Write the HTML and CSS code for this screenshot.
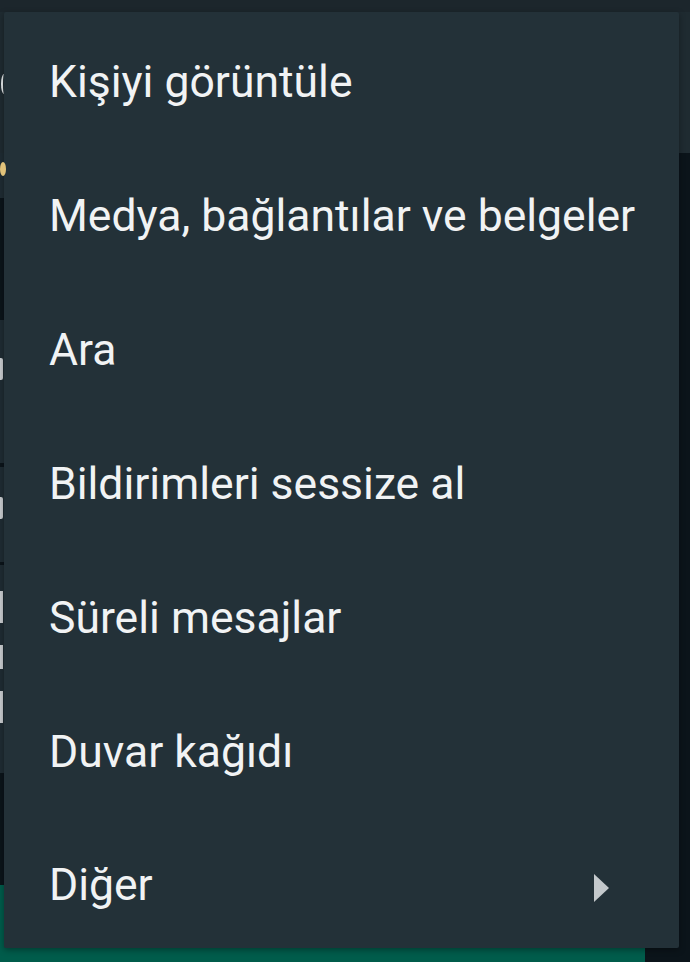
FILE: index.html
```html
<!DOCTYPE html>
<html lang="tr">
<head>
<meta charset="utf-8">
<link rel="stylesheet" href="styles.css">
</head>
<body>
<div class="screen">
  <div class="statusbar"></div>
  <div class="header">
    <span class="back-edge"></span>
    <span class="emoji-edge"></span>
  </div>
  <div class="chat">
    <div class="bubble in b1"></div>
    <div class="bubble in b2"><span class="frag f-a"></span></div>
    <div class="bubble in b3"><span class="frag f-a"></span></div>
    <div class="bubble in b4">
      <span class="frag f-l"></span>
      <span class="frag f-n"></span>
      <span class="frag f-l"></span>
    </div>
    <div class="bubble out"></div>
  </div>

  <ul class="menu">
    <li class="item">Kişiyi görüntüle</li>
    <li class="item">Medya, bağlantılar ve belgeler</li>
    <li class="item">Ara</li>
    <li class="item">Bildirimleri sessize al</li>
    <li class="item">Süreli mesajlar</li>
    <li class="item">Duvar kağıdı</li>
    <li class="item has-sub">Diğer
      <svg class="sub-arrow" width="16" height="28" viewBox="0 0 16 28"><path d="M0 0 L15 14 L0 28 Z" fill="#c4c9cc"/></svg>
    </li>
  </ul>
</div>
</body>
</html>
```
FILE: styles.css
```css
* { box-sizing: border-box; }
html, body { margin: 0; padding: 0; }
body {
  width: 690px;
  height: 962px;
  overflow: hidden;
  background: #0b141a;
  font-family: Roboto, "Noto Sans", sans-serif;
}
.screen {
  position: relative;
  width: 690px;
  height: 962px;
  display: flex;
  flex-direction: column;
}
.statusbar {
  height: 12px;
  background: #1c262c;
}
.header {
  height: 141px;
  background: #1f2b31;
  position: relative;
}
.back-edge {
  position: absolute;
  left: 1px;
  top: 62px;
  width: 6px;
  height: 20px;
  border-left: 2px solid #e9edef;
  border-radius: 50%;
}
.emoji-edge {
  position: absolute;
  left: 0;
  top: 150px;
  width: 6px;
  height: 14px;
  background: #e2c37a;
  border-radius: 50%;
  z-index: 1;
}
.chat {
  flex: 1;
  display: flex;
  flex-direction: column;
  background: #0b141a;
}
.bubble {
  width: 300px;
  display: flex;
  flex-direction: column;
  gap: 22px;
}
.in { background: #1f2c33; }
.b1 { height: 45px; }
.b2 { margin-top: 122px; height: 143px; padding-top: 38px; }
.b3 { margin-top: 4px; height: 95px; padding-top: 30px; }
.b4 { margin-top: 3px; height: 208px; padding-top: 26px; }
.frag {
  display: block;
  width: 3px;
  background: #c9cdd0;
}
.f-a { height: 22px; border-radius: 0 2px 2px 0; }
.f-l { height: 32px; }
.f-n { height: 24px; }
.out {
  margin-top: auto;
  width: 645px;
  height: 77px;
  background: #005c4b;
}

.menu {
  position: absolute;
  top: 12px;
  left: 4px;
  width: 675px;
  height: 936px;
  margin: 0;
  padding: 3px 0 0;
  list-style: none;
  background: #233138;
  border-radius: 2px;
  box-shadow: 0 2px 6px rgba(0,0,0,0.35);
  display: flex;
  flex-direction: column;
  overflow: hidden;
}
.item {
  height: 134px;
  flex: none;
  display: flex;
  align-items: center;
  padding-left: 45px;
  padding-right: 69px;
  font-size: 44.5px;
  white-space: nowrap;
  color: #f1f3f4;
}
.item:last-child { height: 129px; align-items: flex-start; padding-top: 40px; }
.has-sub { justify-content: space-between; }
.sub-arrow { display: block; margin-top: 15px; }
```
